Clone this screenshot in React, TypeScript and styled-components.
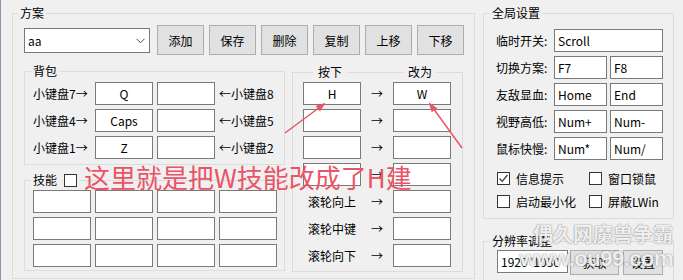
import React from "react";
import styled, { createGlobalStyle } from "styled-components";

const GlobalStyle = createGlobalStyle`
  html, body {
    margin: 0;
    padding: 0;
    background: #f0f0f0;
  }
  body {
    width: 683px;
    height: 280px;
    overflow: hidden;
    font-family: "Noto Sans CJK SC", "Liberation Sans", sans-serif;
    font-size: 12px;
    color: #000;
  }
  * {
    box-sizing: border-box;
  }
`;

const Window = styled.div`
  position: relative;
  width: 683px;
  height: 280px;
  display: flex;
  align-items: flex-start;
  gap: 8px;
  padding: 13px 0 0 12px;
  box-shadow: inset 1px 0 0 #9c8fae;
  overflow: hidden;
`;

const Group = styled.div<{ $w: number; $h: number; $pad: string }>`
  position: relative;
  flex-shrink: 0;
  width: ${(p) => p.$w}px;
  height: ${(p) => p.$h}px;
  padding: ${(p) => p.$pad};
  border: 1px solid #dcdcdc;
`;

const RemapGroup = styled(Group)`
  margin-top: 1px;
`;

const Caption = styled.div<{ $left: number; $side?: number }>`
  position: absolute;
  top: -8px;
  left: ${(p) => p.$left}px;
  display: flex;
  align-items: center;
  gap: 7px;
  padding: 0 ${(p) => p.$side ?? 2}px;
  line-height: 14px;
  background: #f0f0f0;
  white-space: nowrap;
`;

const Toolbar = styled.div`
  display: flex;
  align-items: flex-start;
  height: 30px;
`;

const Combo = styled.div`
  width: 126px;
  height: 25px;
  margin: 3px 7px 0 0;
  padding: 0 4px 0 3px;
  display: flex;
  align-items: center;
  justify-content: space-between;
  background: #fff;
  border: 1px solid #7a7a7a;
`;

const ButtonRow = styled.div`
  display: flex;
  gap: 5px;
`;

const Button = styled.div<{ $w?: number; $h?: number }>`
  width: ${(p) => p.$w ?? 47}px;
  height: ${(p) => p.$h ?? 30}px;
  display: flex;
  align-items: center;
  justify-content: center;
  background: #e1e1e1;
  border: 1px solid #adadad;
`;

const Columns = styled.div`
  display: flex;
  align-items: flex-start;
  gap: 7px;
  margin-top: 16px;
`;

const Stack = styled.div<{ $gap: number }>`
  display: flex;
  flex-direction: column;
  gap: ${(p) => p.$gap}px;
`;

const Field = styled.div<{ $w?: number; $left?: boolean }>`
  width: ${(p) => p.$w ?? 58}px;
  height: 23px;
  display: flex;
  align-items: center;
  justify-content: ${(p) => (p.$left ? "flex-start" : "center")};
  padding: 0 3px;
  background: #fff;
  border: 1px solid #7a7a7a;
  white-space: nowrap;
  overflow: hidden;
`;

const BagGrid = styled.div`
  display: grid;
  grid-template-columns: 58px 58px 58px auto;
  grid-auto-rows: 23px;
  gap: 4px;
  align-items: center;
  white-space: nowrap;
`;

const SkillGrid = styled.div`
  display: grid;
  grid-template-columns: repeat(4, 58px);
  grid-auto-rows: 23px;
  gap: 4px;
`;

const RemapGrid = styled.div`
  display: grid;
  grid-template-columns: 58px 32px 58px;
  grid-auto-rows: 23px;
  row-gap: 4px;
  align-items: center;
  justify-items: center;
  white-space: nowrap;
`;

const SettingRow = styled.div`
  display: flex;
  align-items: center;
  height: 23px;
`;

const SettingLabel = styled.span`
  width: 58px;
  white-space: nowrap;
`;

const FieldPair = styled.div`
  display: flex;
  gap: 3px;
`;

const Checks = styled.div`
  display: grid;
  grid-template-columns: 92px 92px;
  row-gap: 10px;
  margin: 12px 0 0 1px;
`;

const CheckItem = styled.div`
  display: flex;
  align-items: center;
  gap: 6px;
  height: 13px;
  white-space: nowrap;
`;

const Box = styled.span`
  width: 13px;
  height: 13px;
  flex-shrink: 0;
  display: flex;
  background: #fff;
  border: 1px solid #333;
`;

const ResRow = styled.div`
  display: flex;
  align-items: flex-start;
  gap: 2px;
`;

const SecondButton = styled(Button)`
  margin-left: 2px;
`;

const Note = styled.div`
  position: absolute;
  left: 84px;
  top: 163px;
  font-size: 26px;
  line-height: 28px;
  color: #ea5466;
  white-space: nowrap;
`;

const Marks = styled.svg`
  position: absolute;
  left: 0;
  top: 0;
  pointer-events: none;
`;

const Watermark = styled.div`
  position: absolute;
  right: 10px;
  top: 222px;
  display: flex;
  flex-direction: column;
  align-items: flex-end;
  color: rgba(255, 255, 255, 0.9);
  font-weight: bold;
  text-shadow: 0 0 1px rgba(90, 90, 90, 0.7), 0 0 2px rgba(90, 90, 90, 0.4);
  white-space: nowrap;
  pointer-events: none;
`;

const MarkTitle = styled.span`
  font-size: 20px;
  line-height: 24px;
`;

const MarkSite = styled.span`
  font-family: "Liberation Sans", sans-serif;
  font-size: 22px;
  line-height: 26px;
  letter-spacing: -0.5px;
`;

const CheckBox = ({ checked }: { checked?: boolean }) => (
  <Box>
    {checked && (
      <svg width="11" height="11" viewBox="0 0 11 11">
        <polyline points="1.5,5.5 4.2,8.4 9.5,2" fill="none" stroke="#333" strokeWidth="1.2" />
      </svg>
    )}
  </Box>
);

const actions = ["添加", "保存", "删除", "复制", "上移", "下移"];

const bagRows = [
  ["小键盘7→", "Q", "←小键盘8"],
  ["小键盘4→", "Caps", "←小键盘5"],
  ["小键盘1→", "Z", "←小键盘2"],
];

const remapRows = [
  { from: "H", to: "W" },
  { from: "", to: "" },
  { from: "", to: "" },
  { from: "", to: "" },
];

const wheelRows = ["滚轮向上", "滚轮中键", "滚轮向下"];

const settings: { label: string; keys: string[] }[] = [
  { label: "临时开关:", keys: ["Scroll"] },
  { label: "切换方案:", keys: ["F7", "F8"] },
  { label: "友敌显血:", keys: ["Home", "End"] },
  { label: "视野高低:", keys: ["Num+", "Num-"] },
  { label: "鼠标快慢:", keys: ["Num*", "Num/"] },
];

const options = [
  { label: "信息提示", checked: true },
  { label: "窗口锁鼠", checked: false },
  { label: "启动最小化", checked: false },
  { label: "屏蔽LWin", checked: false },
];

export default function App() {
  return (
    <>
      <GlobalStyle />
      <Window>
        <Group $w={463} $h={266} $pad="11px 0 0 11px">
          <Caption $left={5}>方案</Caption>
          <Toolbar>
            <Combo>
              <span>aa</span>
              <svg width="9" height="6" viewBox="0 0 9 6">
                <polyline points="0.5,0.8 4.5,4.8 8.5,0.8" fill="none" stroke="#444" strokeWidth="1" />
              </svg>
            </Combo>
            <ButtonRow>
              {actions.map((a) => (
                <Button key={a}>{a}</Button>
              ))}
            </ButtonRow>
          </Toolbar>
          <Columns>
            <Stack $gap={15}>
              <Group $w={261} $h={94} $pad="10px 0 0 8px">
                <Caption $left={6}>背包</Caption>
                <BagGrid>
                  {bagRows.map(([l, k, r]) => (
                    <React.Fragment key={l}>
                      <span>{l}</span>
                      <Field>{k}</Field>
                      <Field />
                      <span>{r}</span>
                    </React.Fragment>
                  ))}
                </BagGrid>
              </Group>
              <Group $w={261} $h={91} $pad="9px 0 0 8px">
                <Caption $left={6}>
                  技能
                  <CheckBox />
                </Caption>
                <SkillGrid>
                  {Array.from({ length: 12 }).map((_, i) => (
                    <Field key={i} />
                  ))}
                </SkillGrid>
              </Group>
            </Stack>
            <RemapGroup $w={171} $h={200} $pad="9px 0 0 10px">
              <Caption $left={20} $side={5}>按下</Caption>
              <Caption $left={110} $side={5}>改为</Caption>
              <RemapGrid>
                {remapRows.map((r, i) => (
                  <React.Fragment key={i}>
                    <Field>{r.from}</Field>
                    <span>→</span>
                    <Field>{r.to}</Field>
                  </React.Fragment>
                ))}
                {wheelRows.map((w) => (
                  <React.Fragment key={w}>
                    <span>{w}</span>
                    <span>→</span>
                    <Field />
                  </React.Fragment>
                ))}
              </RemapGrid>
            </RemapGroup>
          </Columns>
        </Group>

        <Stack $gap={22}>
          <Group $w={191} $h={206} $pad="15px 0 0 12px">
            <Caption $left={6}>全局设置</Caption>
            <Stack $gap={4}>
              {settings.map((s) => (
                <SettingRow key={s.label}>
                  <SettingLabel>{s.label}</SettingLabel>
                  <FieldPair>
                    {s.keys.map((k) => (
                      <Field key={k} $w={s.keys.length === 1 ? 109 : 53} $left>
                        {k}
                      </Field>
                    ))}
                  </FieldPair>
                </SettingRow>
              ))}
            </Stack>
            <Checks>
              {options.map((o) => (
                <CheckItem key={o.label}>
                  <CheckBox checked={o.checked} />
                  {o.label}
                </CheckItem>
              ))}
            </Checks>
          </Group>
          <Group $w={191} $h={50} $pad="8px 0 0 13px">
            <Caption $left={6}>分辨率调整</Caption>
            <ResRow>
              <Field $w={71} $left>1920*1080</Field>
              <Button $w={49} $h={25}>获取</Button>
              <SecondButton $w={40} $h={25}>设置</SecondButton>
            </ResRow>
          </Group>
        </Stack>

        <Note>这里就是把W技能改成了H建</Note>
        <Marks width="683" height="280" viewBox="0 0 683 280">
          <g stroke="#ea5466" strokeWidth="1.5" fill="#ea5466">
            <line x1="285" y1="133" x2="320" y2="107" />
            <polygon points="324,104 319.9,110.2 316.9,106.2" />
            <line x1="462" y1="148" x2="433" y2="108" />
            <polygon points="430,104 436.1,108.2 432.1,111.1" />
          </g>
        </Marks>
        <Watermark>
          <MarkTitle>偶久网魔兽争霸</MarkTitle>
          <MarkSite>www.ou99.com</MarkSite>
        </Watermark>
      </Window>
    </>
  );
}
